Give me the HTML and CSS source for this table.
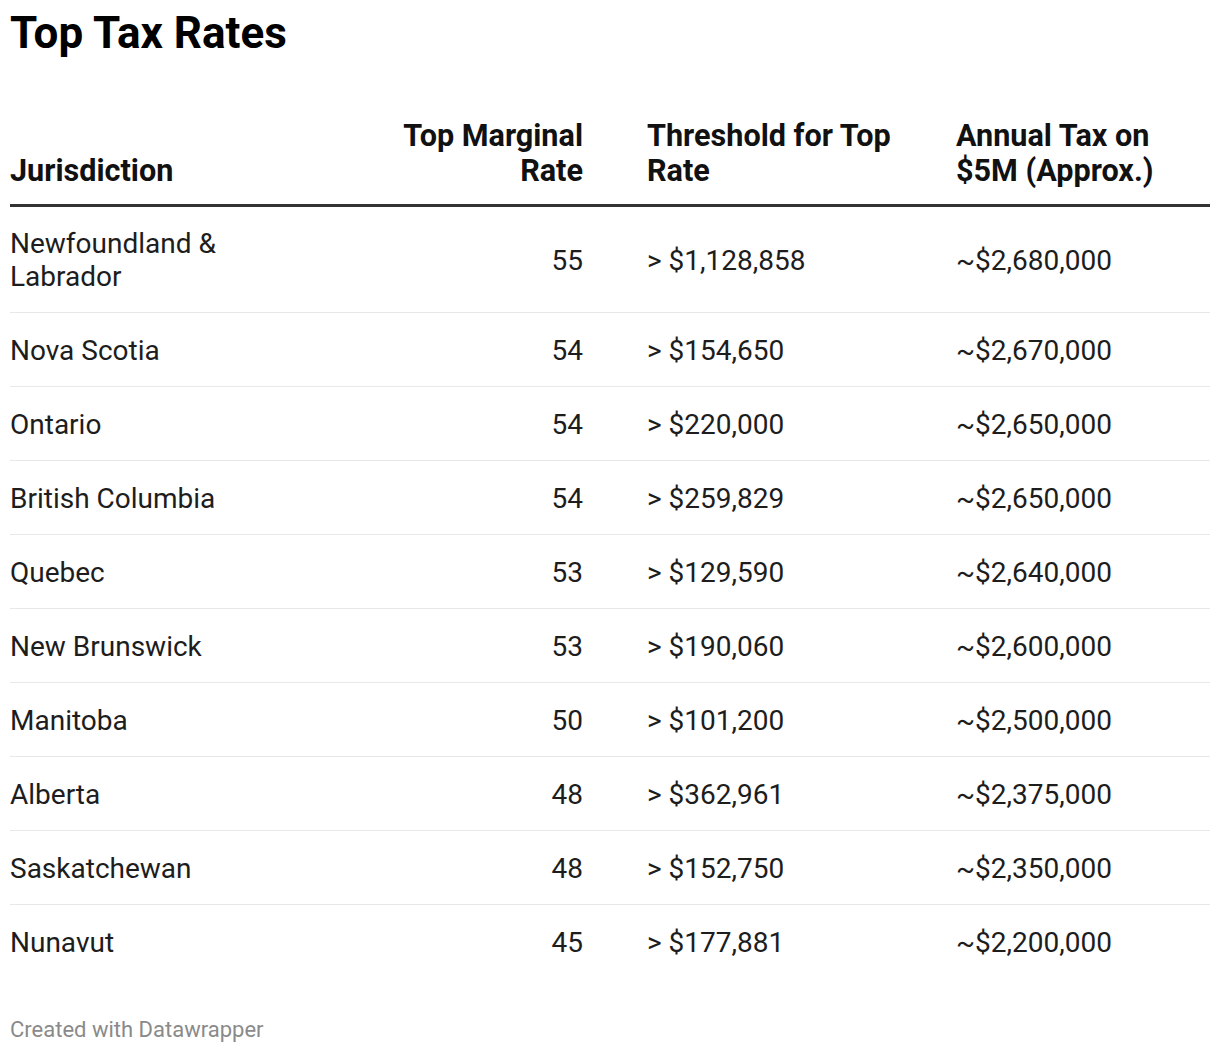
FILE: index.html
```html
<!DOCTYPE html>
<html lang="en">
<head>
<meta charset="utf-8">
<title>Top Tax Rates</title>
<link rel="stylesheet" href="styles.css">
</head>
<body>
<div class="chart">
  <h1 class="title">Top Tax Rates</h1>
  <table class="tax-table">
    <colgroup>
      <col class="c-jur">
      <col class="c-rate">
      <col class="c-thr">
      <col class="c-ann">
    </colgroup>
    <thead>
      <tr>
        <th class="col-jur">Jurisdiction</th>
        <th class="col-rate">Top Marginal Rate</th>
        <th class="col-thr">Threshold for Top Rate</th>
        <th class="col-ann">Annual Tax on $5M (Approx.)</th>
      </tr>
    </thead>
    <tbody>
      <tr class="first"><td class="col-jur">Newfoundland &amp; Labrador</td><td class="col-rate">55</td><td class="col-thr">&gt; $1,128,858</td><td class="col-ann">~$2,680,000</td></tr>
      <tr><td class="col-jur">Nova Scotia</td><td class="col-rate">54</td><td class="col-thr">&gt; $154,650</td><td class="col-ann">~$2,670,000</td></tr>
      <tr><td class="col-jur">Ontario</td><td class="col-rate">54</td><td class="col-thr">&gt; $220,000</td><td class="col-ann">~$2,650,000</td></tr>
      <tr><td class="col-jur">British Columbia</td><td class="col-rate">54</td><td class="col-thr">&gt; $259,829</td><td class="col-ann">~$2,650,000</td></tr>
      <tr><td class="col-jur">Quebec</td><td class="col-rate">53</td><td class="col-thr">&gt; $129,590</td><td class="col-ann">~$2,640,000</td></tr>
      <tr><td class="col-jur">New Brunswick</td><td class="col-rate">53</td><td class="col-thr">&gt; $190,060</td><td class="col-ann">~$2,600,000</td></tr>
      <tr><td class="col-jur">Manitoba</td><td class="col-rate">50</td><td class="col-thr">&gt; $101,200</td><td class="col-ann">~$2,500,000</td></tr>
      <tr><td class="col-jur">Alberta</td><td class="col-rate">48</td><td class="col-thr">&gt; $362,961</td><td class="col-ann">~$2,375,000</td></tr>
      <tr><td class="col-jur">Saskatchewan</td><td class="col-rate">48</td><td class="col-thr">&gt; $152,750</td><td class="col-ann">~$2,350,000</td></tr>
      <tr class="last"><td class="col-jur">Nunavut</td><td class="col-rate">45</td><td class="col-thr">&gt; $177,881</td><td class="col-ann">~$2,200,000</td></tr>
    </tbody>
  </table>
  <div class="footer">Created with Datawrapper</div>
</div>
</body>
</html>
```
FILE: styles.css
```css
html, body {
  margin: 0;
  padding: 0;
  background: #ffffff;
}
body {
  font-family: Roboto, "Liberation Sans", Arial, sans-serif;
  color: #1d1d1d;
}
.chart {
  padding: 8px 10px 0 10px;
  width: 1200px;
}
.title {
  margin: 0;
  font-size: 44px;
  font-weight: 700;
  line-height: 51px;
  color: #000000;
}
.tax-table {
  margin-top: 59px;
  width: 1200px;
  border-collapse: collapse;
  table-layout: fixed;
}
.c-jur { width: 290px; }
.c-rate { width: 315px; }
.c-thr { width: 310px; }
.c-ann { width: 285px; }
.tax-table th {
  font-size: 30.6px;
  font-weight: 700;
  line-height: 35px;
  color: #111111;
  vertical-align: bottom;
  text-align: left;
  padding: 0 0 16px 0;
  border-bottom: 3px solid #333333;
}
.tax-table td {
  font-size: 28px;
  font-weight: 400;
  line-height: 33px;
  color: #1d1d1d;
  padding: 21px 0 19px 0;
  border-bottom: 1px solid #e8e8e8;
  vertical-align: middle;
}
.tax-table tr.first td {
  padding-top: 20px;
}
.tax-table tr.last td {
  border-bottom: none;
}
.tax-table .col-rate {
  text-align: right;
  padding-left: 60px;
  padding-right: 32px;
}
.tax-table .col-thr {
  padding-left: 32px;
  padding-right: 10px;
}
.tax-table .col-ann {
  padding-left: 31px;
  padding-right: 10px;
}
.footer {
  margin-top: 39px;
  font-size: 22px;
  line-height: 26px;
  color: #8a8a8a;
}
```
